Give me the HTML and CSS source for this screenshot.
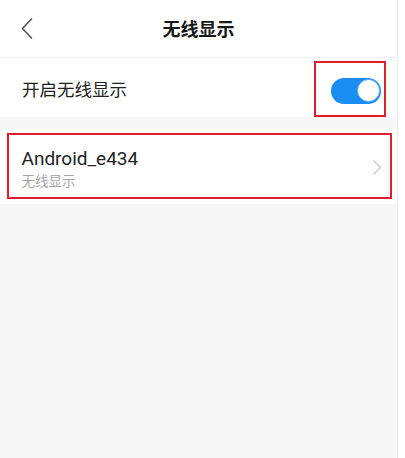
FILE: index.html
```html
<!DOCTYPE html>
<html lang="zh-CN">
<head>
  <meta charset="UTF-8" />
  <meta name="viewport" content="width=device-width, initial-scale=1.0"/>
  <title>无线显示</title>
  <link rel="stylesheet" href="styles.css">
</head>
<body>

  <div class="screen">
    <header class="header">
      <a href="#" class="back-arrow">
        <svg width="12" height="21" viewBox="0 0 12 21">
          <path d="M10.5 1 L1.5 10.5 L10.5 20" fill="none" stroke="#555" stroke-width="1.6" stroke-linecap="round" stroke-linejoin="round"/>
        </svg>
      </a>
      <h1 class="title">无线显示</h1>
    </header>

    <div class="switch-row">
      <span class="switch-label">开启无线显示</span>
      <div class="mark mark-switch">
        <div class="toggle on">
          <span class="knob"></span>
        </div>
      </div>
    </div>

    <div class="device-list">
      <div class="device-card">
        <div class="mark mark-device">
          <div class="device-info">
            <div class="device-name">Android_e434</div>
            <div class="device-sub">无线显示</div>
          </div>
          <svg class="chevron" width="9" height="15" viewBox="0 0 9 15">
            <path d="M1 1 L7.5 7.5 L1 14" fill="none" stroke="#c6c6c6" stroke-width="1.3" stroke-linecap="round" stroke-linejoin="round"/>
          </svg>
        </div>
      </div>
    </div>
  </div>

</body>
</html>
```

FILE: styles.css
```css
body {
  margin: 0;
  background-color: #fff;
  font-family: Roboto, "Noto Sans CJK SC", sans-serif;
  color: #222;
}

.screen {
  width: 398px;
  height: 458px;
  background-color: #f7f7f7;
  display: flex;
  flex-direction: column;
  border-right: 1px solid #ececec;
  box-sizing: border-box;
}

/* CABECERA */
.header {
  height: 58px;
  background-color: #fff;
  border-bottom: 1px solid #f0f0f0;
  display: flex;
  align-items: center;
  position: relative;
  box-sizing: border-box;
}

.back-arrow {
  display: flex;
  padding-left: 21px;
  margin-top: -1px;
}

.title {
  position: absolute;
  left: 0;
  right: 0;
  margin: 0;
  text-align: center;
  font-family: "Noto Sans CJK SC", sans-serif;
  font-size: 18px;
  font-weight: 700;
  color: #161616;
  pointer-events: none;
  margin-top: -2px;
}

/* FILA INTERRUPTOR */
.switch-row {
  height: 59px;
  background-color: #fff;
  display: flex;
  align-items: center;
  justify-content: space-between;
  padding: 0 11px 0 22px;
}

.switch-label {
  font-family: "Noto Sans CJK SC", sans-serif;
  font-size: 17.5px;
  color: #222;
  margin-top: 2px;
}

.mark {
  border: 2px solid #dc1f2c;
}

.mark-switch {
  width: 65px;
  height: 52px;
  margin-top: 3px;
  display: flex;
  align-items: center;
  justify-content: flex-end;
  padding-right: 3px;
}

.toggle {
  width: 50px;
  height: 26px;
  border-radius: 13px;
  background-color: #1a8df3;
  display: flex;
  align-items: center;
  justify-content: flex-end;
  padding: 0 1px;
  box-sizing: border-box;
  margin-top: 3px;
}

.knob {
  width: 23px;
  height: 23px;
  border-radius: 50%;
  background-color: #fff;
  border: 1px solid #5aaef6;
  box-sizing: border-box;
}

/* LISTA DE DISPOSITIVOS */
.device-list {
  margin-top: 12px;
}

.device-card {
  background-color: #fff;
  padding: 4px 5px 5px 7px;
}

.mark-device {
  height: 62px;
  border-width: 2.5px;
  display: flex;
  align-items: center;
  justify-content: space-between;
  padding: 0 8px 0 12.5px;
}

.device-info {
  display: flex;
  flex-direction: column;
  gap: 1px;
  margin-top: 4px;
}

.device-name {
  font-size: 19px;
  color: #222;
  line-height: 22px;
}

.device-sub {
  font-family: "Noto Sans CJK SC", sans-serif;
  font-size: 13.5px;
  color: #a4a4a4;
  line-height: 18px;
}

.chevron {
  margin-top: 2px;
}
```
